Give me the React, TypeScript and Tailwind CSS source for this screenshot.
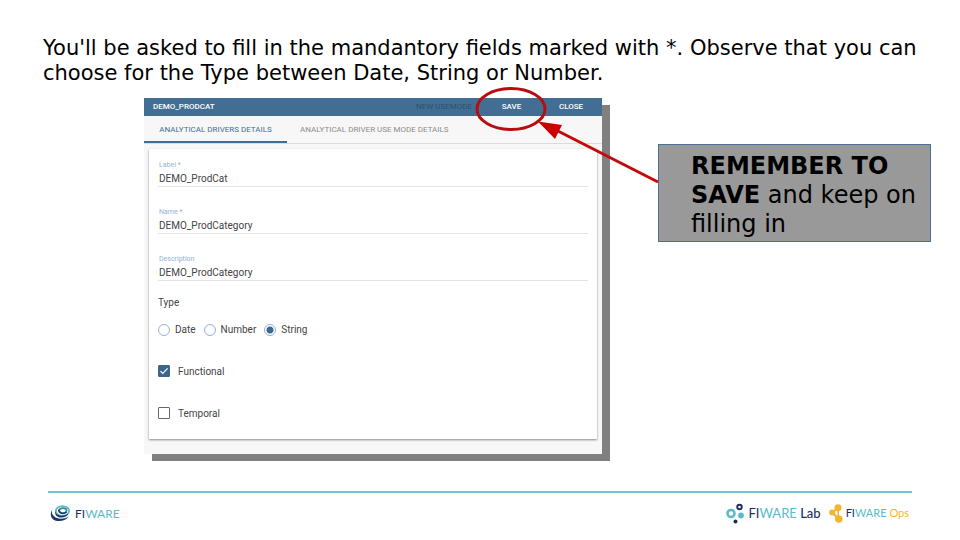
import React from "react";

type FieldProps = { id: string; label: string; value: string };

function Field({ id, label, value }: FieldProps) {
  return (
    <div className="flex h-[47px] flex-col">
      <label htmlFor={id} className="h-[10px] px-px text-[7px] leading-[10px] text-[#8fb4d3]">
        {label}
      </label>
      <input
        id={id}
        defaultValue={value}
        className="h-[17px] w-full border-b border-[#e4e4e4] bg-transparent px-px text-[10px] leading-4 text-[#444] outline-none"
      />
    </div>
  );
}

function Radio({ label, checked }: { label: string; checked?: boolean }) {
  return (
    <label className="flex items-center gap-[5px]">
      <input
        type="radio"
        name="type"
        defaultChecked={checked}
        className="size-3 appearance-none rounded-full border border-[#93b2d3] bg-white checked:bg-[radial-gradient(circle,#3b678c_3px,white_4px)]"
      />
      {label}
    </label>
  );
}

function Check({ label, checked }: { label: string; checked?: boolean }) {
  return (
    <label className="flex h-[42px] items-center gap-2">
      <span className="relative flex size-3">
        <input
          type="checkbox"
          defaultChecked={checked}
          className="size-3 appearance-none rounded-[1px] border border-[#666] bg-white checked:border-[#3b678c] checked:bg-[#3b678c]"
        />
        {checked && (
          <svg viewBox="0 0 12 12" className="pointer-events-none absolute inset-0" aria-hidden="true">
            <path d="M2.5 6.2 L4.8 8.5 L9.6 3.4" fill="none" stroke="white" strokeWidth="1.2" />
          </svg>
        )}
      </span>
      {label}
    </label>
  );
}

function DriverWindow() {
  return (
    <section className="w-[458px] shrink-0 bg-[#f7f7f7] pb-[15px] font-[Roboto,sans-serif] shadow-[8px_7px_0_#808080]">
      <header className="flex h-[18px] items-center bg-[#426e94] px-[9px] text-[8px] text-white">
        <h2 className="flex-1 text-[8px] font-medium">DEMO_PRODCAT</h2>
        <button className="w-[60px] text-[#2f5070]">NEW USEMODE</button>
        <button className="w-[75px] font-medium">SAVE</button>
        <button className="w-[44px] font-medium">CLOSE</button>
      </header>
      <nav className="flex h-7 border-b border-[#dcdcdc] text-[8px]">
        <button className="w-[143px] border-b-2 border-[#426e94] pt-[2px] text-[#426e94]">ANALYTICAL DRIVERS DETAILS</button>
        <button className="px-[13px] text-[#8c8c8c]">ANALYTICAL DRIVER USE MODE DETAILS</button>
      </nav>
      <form className="mx-[5px] mt-[5px] bg-white px-[9px] pt-[11px] pb-[5px] text-[10px] text-[#444] shadow-[0_1px_2px_#888]">
        <Field id="label" label="Label *" value="DEMO_ProdCat" />
        <Field id="name" label="Name *" value="DEMO_ProdCategory" />
        <Field id="description" label="Description" value="DEMO_ProdCategory" />
        <fieldset className="-mt-1">
          <legend className="h-3 leading-3">Type</legend>
          <div className="flex h-[41px] items-center gap-2">
            <Radio label="Date" />
            <Radio label="Number" />
            <Radio label="String" checked />
          </div>
        </fieldset>
        <Check label="Functional" checked />
        <Check label="Temporal" />
      </form>
    </section>
  );
}

function Annotations() {
  return (
    <svg
      width="520"
      height="110"
      viewBox="0 0 520 110"
      className="pointer-events-none absolute -top-[14px] left-0"
      aria-hidden="true"
    >
      <ellipse cx="367" cy="25" rx="34" ry="20.5" fill="none" stroke="#b80d10" strokeWidth="3" />
      <path d="M410 45 L514 98" stroke="#c40a0a" strokeWidth="3" />
      <path d="M394 37.5 L418 41 L411 55 Z" fill="#cc0000" />
    </svg>
  );
}

function FiwareMark() {
  return (
    <svg width="21" height="17" viewBox="0 0 21 17" fill="none" aria-hidden="true">
      <ellipse cx="12.5" cy="6" rx="6.6" ry="4.9" stroke="#5bbcc9" strokeWidth="1.8" />
      <ellipse cx="13" cy="5.6" rx="3.6" ry="2.5" stroke="#3b86a8" strokeWidth="1.6" />
      <path d="M6 3.5 C3.5 9 10 13.5 18.5 8.5 C16 14.5 1.5 14.5 6 3.5Z" fill="#1b3764" />
      <path d="M2.5 4 C-0.5 11 8 17 19 11.5 C12 20 -4.5 16 2.5 4Z" fill="#1b3764" />
      <path d="M9 4.5 C8 8 13 10 16.5 7" stroke="#1b3764" strokeWidth="1.4" />
    </svg>
  );
}

function LabMark() {
  return (
    <svg width="19" height="21" viewBox="0 0 19 21" aria-hidden="true">
      <circle cx="5" cy="10.5" r="3.5" fill="none" stroke="#5bbcc9" strokeWidth="2.6" />
      <circle cx="13.5" cy="4" r="2.3" fill="none" stroke="#1b2f5c" strokeWidth="1.9" />
      <circle cx="15" cy="12.5" r="2.9" fill="#5bbcc9" />
      <circle cx="9.5" cy="18.5" r="2" fill="#1b2f5c" />
    </svg>
  );
}

function OpsMark() {
  return (
    <svg width="15" height="19" viewBox="0 0 15 19" fill="#f3b52f" aria-hidden="true">
      <path d="M9 4 L3.5 8.5 L9.5 15" fill="none" stroke="#f3b52f" strokeWidth="2.2" />
      <path d="M9.2 4 V15" stroke="#f3b52f" strokeWidth="1.6" />
      <circle cx="9" cy="3.8" r="3.5" />
      <circle cx="3.2" cy="8.5" r="3" />
      <circle cx="9.8" cy="15" r="3.8" />
    </svg>
  );
}

function Wordmark({ suffix, tone }: { suffix?: string; tone?: string }) {
  return (
    <span className="whitespace-nowrap text-[#1b2f5c]">
      FI<span className="text-[#5bbcc9]">WARE</span>
      {suffix && <span className={tone}> {suffix}</span>}
    </span>
  );
}

export default function App() {
  return (
    <main className="flex min-h-screen flex-col bg-white pt-9 text-black">
      <h1 className="pr-4 pl-[43px] font-['DejaVu_Sans',sans-serif] text-[21px] leading-[25px]">
        You'll be asked to fill in the mandantory fields marked with *. Observe that you can choose for the Type
        between Date, String or Number.
      </h1>
      <div className="relative mt-3 ml-[144px] flex items-start gap-14">
        <DriverWindow />
        <aside className="mt-[46px] w-[273px] border border-[#4a6f99] bg-[#999] pt-[7px] pb-[2px] pr-2 pl-8 font-['DejaVu_Sans',sans-serif] text-[24px] leading-[29px]">
          <strong>REMEMBER TO SAVE</strong> and keep on filling in
        </aside>
        <Annotations />
      </div>
      <footer className="mx-12 mt-[37px] flex items-center border-t-2 border-[#74c7cf] pt-[10px] font-[Lato,sans-serif] text-[13px]">
        <div className="flex flex-1 items-center gap-1 pl-[2px] text-[12px]">
          <FiwareMark />
          <Wordmark />
        </div>
        <div className="flex items-center gap-[3px]">
          <LabMark />
          <Wordmark suffix="Lab" tone="font-medium" />
        </div>
        <div className="mr-[3px] ml-2 flex items-center gap-[2px] text-[11px]">
          <OpsMark />
          <Wordmark suffix="Ops" tone="text-[#f3b52f]" />
        </div>
      </footer>
    </main>
  );
}
